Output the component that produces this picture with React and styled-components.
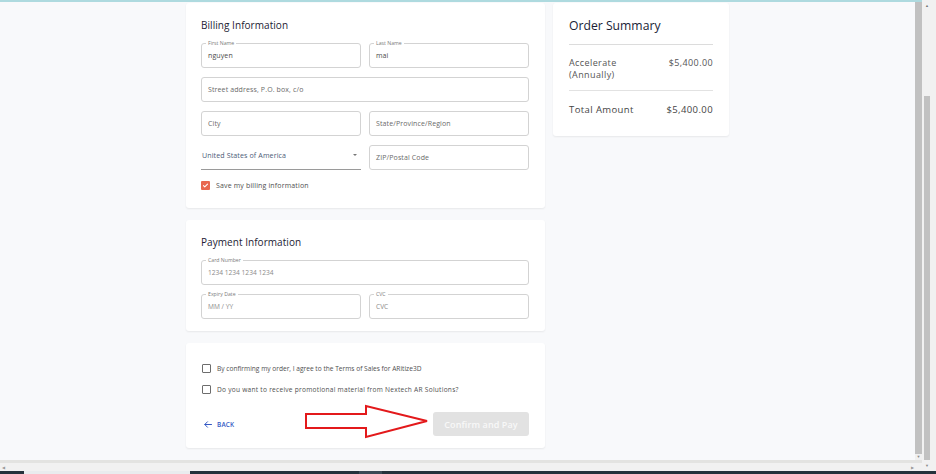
import React from "react";
import styled, { createGlobalStyle } from "styled-components";

const Global = createGlobalStyle`
  html, body { margin: 0; padding: 0; background: #f8f9fb; }
  body { font-family: "Open Sans", "Liberation Sans", sans-serif; }
  * { box-sizing: border-box; }
`;

const Screen = styled.div`
  width: 936px;
  height: 474px;
  display: flex;
  flex-direction: column;
  overflow: hidden;
`;

const Body = styled.div`
  flex: 1;
  display: flex;
  min-height: 0;
`;

const LeftPart = styled.div`
  width: 922px;
  display: flex;
  flex-direction: column;
  border-top: 2px solid #aedadf;
`;

const ViewRow = styled.div`
  flex: 1;
  display: flex;
  min-height: 0;
`;

const Viewport = styled.div`
  flex: 1;
  background: #f8f9fb;
  display: flex;
  align-items: flex-start;
  padding: 1px 0 0 186px;
  gap: 8px;
  overflow: hidden;
  position: relative;
`;

const InnerScroll = styled.div`
  width: 7px;
  display: flex;
  flex-direction: column;
  background: #f0f0f0;
`;

const InnerThumb = styled.div`
  flex: 1;
  background: #c1c1c1;
`;

const ScrollArrow = styled.div`
  height: ${(p) => p.$h || 6}px;
  display: flex;
  align-items: center;
  justify-content: center;
  color: #8a8a8a;
  font-size: 4px;
  line-height: 1;
  background: #f0f0f0;
`;

const HScroll = styled.div`
  height: 11px;
  background: #f1f1f1;
  border-top: 3px solid #e3e3e1;
  display: flex;
  align-items: center;
  justify-content: space-between;
  padding: 0 8px 0 2px;
  color: #9a9a9a;
  font-size: 4px;
`;

const OuterScroll = styled.div`
  width: 14px;
  background: #f1f1f1;
  display: flex;
  flex-direction: column;
  align-items: flex-start;
  padding: 0 0 0 2px;
`;

const OuterTop = styled.div`
  height: 96px;
  width: 6px;
  display: flex;
  justify-content: center;
  padding-top: 3px;
  color: #777;
  font-size: 4px;
`;

const OuterThumb = styled.div`
  width: 6px;
  height: 364px;
  background: #c1c1c1;
`;

const OuterBottom = styled.div`
  width: 6px;
  flex: 1;
  display: flex;
  justify-content: center;
  align-items: center;
  color: #888;
  font-size: 4px;
`;

const Taskbar = styled.div`
  height: 3px;
  display: flex;
  background: #24323b;
`;

const TaskSeg = styled.div`
  width: ${(p) => p.$w}px;
  background: ${(p) => p.$c};
`;

const Column = styled.div`
  width: 359px;
  display: flex;
  flex-direction: column;
  gap: 12px;
`;

const Card = styled.div`
  background: #fff;
  border-radius: 3px;
  box-shadow: 0 1px 2px rgba(0, 0, 0, 0.07);
  padding: ${(p) => p.$pad || "15px 16px 15px 15px"};
  display: flex;
  flex-direction: column;
  position: relative;
`;

const Title = styled.div`
  font-size: 10px;
  line-height: 14px;
  color: #1d2233;
  margin-bottom: ${(p) => p.$mb || 11}px;
  letter-spacing: 0.05px;
`;

const Grid = styled.div`
  display: grid;
  grid-template-columns: 1fr 1fr;
  column-gap: 8px;
  row-gap: 9px;
`;

const Field = styled.div`
  position: relative;
  height: 25px;
  border: 1px solid #d3d3d3;
  border-radius: 3px;
  display: flex;
  align-items: center;
  padding-left: 6px;
  font-size: ${(p) => (p.$stripe ? 6.6 : 7)}px;
  letter-spacing: ${(p) => (p.$stripe ? 0 : 0.12)}px;
  color: ${(p) => (p.$filled ? "#4a4a4a" : p.$stripe ? "#8a8a8a" : "#6a6a6a")};
  grid-column: ${(p) => (p.$full ? "1 / span 2" : "auto")};
`;

const FieldLabel = styled.span`
  position: absolute;
  top: -4px;
  left: 4px;
  padding: 0 2px;
  background: #fff;
  font-size: 5.2px;
  line-height: 6px;
  letter-spacing: 0;
  color: #7a7a7a;
`;

const SelectBox = styled.div`
  height: 25px;
  border-bottom: 1px solid #9a9a9a;
  display: flex;
  align-items: center;
  justify-content: space-between;
  padding: 0 4px 4px 1px;
  font-size: 7.1px;
  letter-spacing: 0.1px;
  color: #4c5b78;
`;

const Caret = styled.span`
  width: 0;
  height: 0;
  border-left: 2.5px solid transparent;
  border-right: 2.5px solid transparent;
  border-top: 2.5px solid #777;
`;

const CheckRow = styled.label`
  display: flex;
  align-items: center;
  gap: 6px;
  font-size: ${(p) => p.$fs || 7}px;
  letter-spacing: ${(p) => p.$ls ?? 0.15}px;
  color: #4f4f4f;
  height: 10px;
  white-space: nowrap;
  margin-top: ${(p) => p.$mt || 0}px;
  padding-left: ${(p) => p.$pl || 0}px;
`;

const Box = styled.span`
  flex: none;
  width: 9px;
  height: 9px;
  border-radius: 1px;
  display: flex;
  align-items: center;
  justify-content: center;
  background: ${(p) => (p.$checked ? "#e8674f" : "#fff")};
  border: ${(p) => (p.$checked ? "none" : "1.3px solid #6d6d6d")};
`;

const Actions = styled.div`
  display: flex;
  align-items: center;
  justify-content: space-between;
  margin-top: 18px;
  height: 24px;
`;

const BackButton = styled.button`
  display: flex;
  align-items: center;
  gap: 5px;
  border: none;
  background: none;
  padding: 0 0 0 3px;
  font-family: inherit;
  font-size: 6.4px;
  font-weight: 600;
  color: #3358c4;
  letter-spacing: 0.2px;
`;

const PayButton = styled.button`
  width: 96px;
  height: 24px;
  border: none;
  border-radius: 3px;
  background: #e2e2e2;
  color: #f8f8f8;
  font-family: inherit;
  font-size: 9px;
  font-weight: 600;
  letter-spacing: 0.1px;
`;

const Annotation = styled.svg`
  position: absolute;
  left: 118px;
  top: 61px;
  overflow: visible;
`;

const Summary = styled(Card)`
  width: 176px;
  padding: 16px 16px 18px 16px;
`;

const SummaryTitle = styled.div`
  font-size: 12.2px;
  line-height: 14px;
  color: #1a1d36;
  padding-bottom: 11px;
  border-bottom: 1px solid #dcdcdc;
`;

const SumRow = styled.div`
  display: flex;
  justify-content: space-between;
  align-items: flex-start;
  font-size: ${(p) => p.$fs || 9}px;
  letter-spacing: 0.4px;
  line-height: 12px;
  color: ${(p) => p.$c || "#555"};
  padding: ${(p) => p.$pad};
  border-bottom: ${(p) => (p.$line ? "1px solid #e2e2e2" : "none")};
`;

function Check() {
  return (
    <svg width="7" height="7" viewBox="0 0 24 24" fill="none" stroke="#fff" strokeWidth="3.5" strokeLinecap="round" strokeLinejoin="round">
      <path d="M5 12.5l4.5 4.5L19 7" />
    </svg>
  );
}

export default function App() {
  return (
    <>
      <Global />
      <Screen>
        <Body>
          <LeftPart>
            <ViewRow>
              <Viewport>
                <Column>
                  <Card $pad="15px 16px 18px 15px">
                    <Title>Billing Information</Title>
                    <Grid>
                      <Field $filled>
                        <FieldLabel>First Name</FieldLabel>nguyen
                      </Field>
                      <Field $filled>
                        <FieldLabel>Last Name</FieldLabel>mai
                      </Field>
                      <Field $full>Street address, P.O. box, c/o</Field>
                      <Field>City</Field>
                      <Field>State/Province/Region</Field>
                      <SelectBox>
                        <span>United States of America</span>
                        <Caret />
                      </SelectBox>
                      <Field>ZIP/Postal Code</Field>
                    </Grid>
                    <CheckRow $mt={10}>
                      <Box $checked>
                        <Check />
                      </Box>
                      Save my billing information
                    </CheckRow>
                  </Card>
                  <Card $pad="15px 16px 12px 15px">
                    <Title $mb={11}>Payment Information</Title>
                    <Grid>
                      <Field $full $stripe>
                        <FieldLabel>Card Number</FieldLabel>1234 1234 1234 1234
                      </Field>
                      <Field $stripe>
                        <FieldLabel>Expiry Date</FieldLabel>MM / YY
                      </Field>
                      <Field $stripe>
                        <FieldLabel>CVC</FieldLabel>CVC
                      </Field>
                    </Grid>
                  </Card>
                  <Card $pad="20px 16px 12px 15px">
                    <CheckRow $pl={1} $fs={6.6} $ls={0}>
                      <Box />
                      By confirming my order, I agree to the Terms of Sales for ARitize3D
                    </CheckRow>
                    <CheckRow $pl={1} $fs={6.6} $ls={0.25} $mt={11}>
                      <Box />
                      Do you want to receive promotional material from Nextech AR Solutions?
                    </CheckRow>
                    <Actions>
                      <BackButton>
                        <svg width="8" height="7" viewBox="0 0 16 14" fill="none" stroke="#3358c4" strokeWidth="2" strokeLinecap="round" strokeLinejoin="round">
                          <path d="M15 7H2M7 1.5L1.5 7 7 12.5" />
                        </svg>
                        BACK
                      </BackButton>
                      <PayButton>Confirm and Pay</PayButton>
                    </Actions>
                    <Annotation width="124" height="36" viewBox="0 0 124 36">
                      <polygon
                        points="2,10 62,10 62,2 123,17 62,33 62,24 2,24"
                        fill="#fff"
                        stroke="#e3191b"
                        strokeWidth="2"
                        strokeLinejoin="miter"
                      />
                    </Annotation>
                  </Card>
                </Column>
                <Summary>
                  <SummaryTitle>Order Summary</SummaryTitle>
                  <SumRow $pad="12px 0 9px 0" $line>
                    <span>
                      Accelerate
                      <br />
                      (Annually)
                    </span>
                    <span>$5,400.00</span>
                  </SumRow>
                  <SumRow $pad="13px 0 2px 0" $fs={9.5} $c="#444">
                    <span>Total Amount</span>
                    <span>$5,400.00</span>
                  </SumRow>
                </Summary>
              </Viewport>
              <InnerScroll>
                <InnerThumb />
                <ScrollArrow $h={6}>▼</ScrollArrow>
              </InnerScroll>
            </ViewRow>
            <HScroll>
              <span>◀</span>
              <span>▶</span>
            </HScroll>
          </LeftPart>
          <OuterScroll>
            <OuterTop>▲</OuterTop>
            <OuterThumb />
            <OuterBottom>▼</OuterBottom>
          </OuterScroll>
        </Body>
        <Taskbar>
          <TaskSeg $w={24} $c="#24323b" />
          <TaskSeg $w={166} $c="#e9ecee" />
          <TaskSeg $w={169} $c="#24323b" />
          <TaskSeg $w={23} $c="#3b4a55" />
          <TaskSeg $w={554} $c="#24323b" />
        </Taskbar>
      </Screen>
    </>
  );
}
